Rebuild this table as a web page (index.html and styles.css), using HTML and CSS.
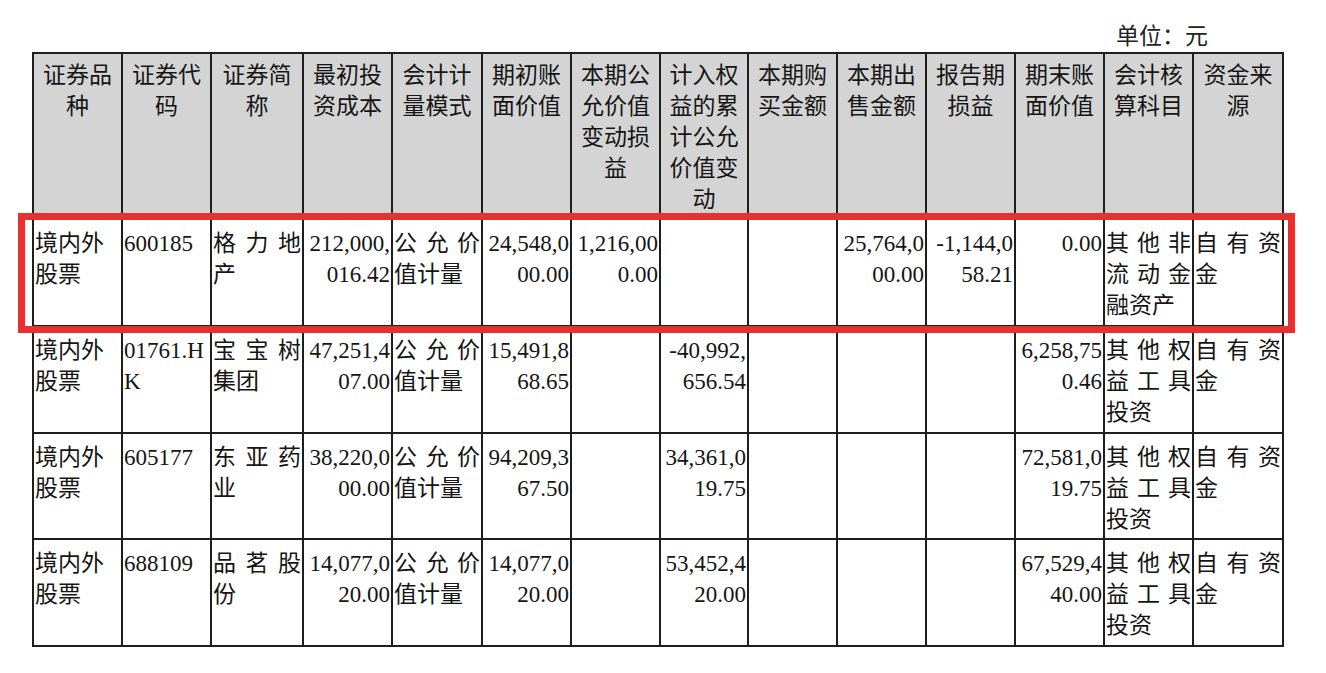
FILE: index.html
```html
<!DOCTYPE html>
<html lang="zh-CN">
<head>
<meta charset="utf-8">
<title>证券投资情况</title>
<link rel="stylesheet" href="styles.css">
</head>
<body>
<div class="page">
  <div class="unit">单位：元</div>
  <div class="table-wrap">
    <table class="grid">
      <colgroup>
        <col class="c89"><col class="c89"><col class="c92"><col class="c89"><col class="c90"><col class="c89"><col class="c89"><col class="c88"><col class="c89"><col class="c89"><col class="c89"><col class="c89"><col class="c89"><col class="c90">
      </colgroup>
      <thead>
        <tr>
          <th>证券品种</th>
          <th>证券代码</th>
          <th>证券简称</th>
          <th>最初投资成本</th>
          <th>会计计量模式</th>
          <th>期初账面价值</th>
          <th>本期公允价值变动损益</th>
          <th>计入权益的累计公允价值变动</th>
          <th>本期购买金额</th>
          <th>本期出售金额</th>
          <th>报告期损益</th>
          <th>期末账面价值</th>
          <th>会计核算科目</th>
          <th>资金来源</th>
        </tr>
      </thead>
      <tbody>
        <tr class="r1">
          <td class="txt">境内外股票</td>
          <td class="txt">600185</td>
          <td class="jst">格力地产</td>
          <td class="num">212,000,<br>016.42</td>
          <td class="jst">公允价值计量</td>
          <td class="num">24,548,0<br>00.00</td>
          <td class="num">1,216,00<br>0.00</td>
          <td class="num"></td>
          <td class="num"></td>
          <td class="num">25,764,0<br>00.00</td>
          <td class="num">-1,144,0<br>58.21</td>
          <td class="num">0.00</td>
          <td class="jst">其他非流动金融资产</td>
          <td class="jst">自有资金</td>
        </tr>
        <tr class="r2">
          <td class="txt">境内外股票</td>
          <td class="txt">01761.H<br>K</td>
          <td class="jst">宝宝树集团</td>
          <td class="num">47,251,4<br>07.00</td>
          <td class="jst">公允价值计量</td>
          <td class="num">15,491,8<br>68.65</td>
          <td class="num"></td>
          <td class="num">-40,992,<br>656.54</td>
          <td class="num"></td>
          <td class="num"></td>
          <td class="num"></td>
          <td class="num">6,258,75<br>0.46</td>
          <td class="jst">其他权益工具投资</td>
          <td class="jst">自有资金</td>
        </tr>
        <tr class="r3">
          <td class="txt">境内外股票</td>
          <td class="txt">605177</td>
          <td class="jst">东亚药业</td>
          <td class="num">38,220,0<br>00.00</td>
          <td class="jst">公允价值计量</td>
          <td class="num">94,209,3<br>67.50</td>
          <td class="num"></td>
          <td class="num">34,361,0<br>19.75</td>
          <td class="num"></td>
          <td class="num"></td>
          <td class="num"></td>
          <td class="num">72,581,0<br>19.75</td>
          <td class="jst">其他权益工具投资</td>
          <td class="jst">自有资金</td>
        </tr>
        <tr class="r4">
          <td class="txt">境内外股票</td>
          <td class="txt">688109</td>
          <td class="jst">品茗股份</td>
          <td class="num">14,077,0<br>20.00</td>
          <td class="jst">公允价值计量</td>
          <td class="num">14,077,0<br>20.00</td>
          <td class="num"></td>
          <td class="num">53,452,4<br>20.00</td>
          <td class="num"></td>
          <td class="num"></td>
          <td class="num"></td>
          <td class="num">67,529,4<br>40.00</td>
          <td class="jst">其他权益工具投资</td>
          <td class="jst">自有资金</td>
        </tr>
      </tbody>
    </table>
    <div class="highlight"></div>
  </div>
</div>
</body>
</html>
```

FILE: styles.css
```css
html, body {
  margin: 0;
  padding: 0;
  background: #ffffff;
}

body {
  font-family: "Liberation Serif", "Noto Sans CJK SC", serif;
  color: #151515;
  font-size: 23px;
}

.page {
  padding-top: 22px;
}

.unit {
  text-align: right;
  padding-right: 118px;
  line-height: 30px;
  height: 30px;
  color: #222;
}

.table-wrap {
  position: relative;
  margin-left: 32px;
  width: 1251px;
}

.grid {
  border-collapse: collapse;
  table-layout: fixed;
  width: 1251px;
}

.c88 { width: 88px; }
.c89 { width: 89px; }
.c90 { width: 90px; }
.c92 { width: 92px; }

.grid th,
.grid td {
  border: 2px solid #1e1e1e;
  line-height: 31px;
  vertical-align: top;
  overflow: hidden;
  box-sizing: border-box;
}

.grid th {
  background: #d4d4d4;
  font-weight: normal;
  text-align: center;
  padding: 6px 1px 0;
  height: 166px;
}

.grid td {
  padding: 8px 1px 0;
  background: #ffffff;
}

.grid tr.r1 td { height: 107px; }
.grid tr.r2 td { height: 107px; }
.grid tr.r3 td { height: 106px; }
.grid tr.r4 td { height: 107px; }

.txt {
  text-align: left;
}

.jst {
  text-align: justify;
  text-justify: inter-character;
}

.num {
  text-align: right;
  white-space: nowrap;
}

.highlight {
  position: absolute;
  left: -14px;
  top: 161px;
  width: 1277px;
  height: 120px;
  box-sizing: border-box;
  border: 7px solid #e8312f;
  pointer-events: none;
}
```
